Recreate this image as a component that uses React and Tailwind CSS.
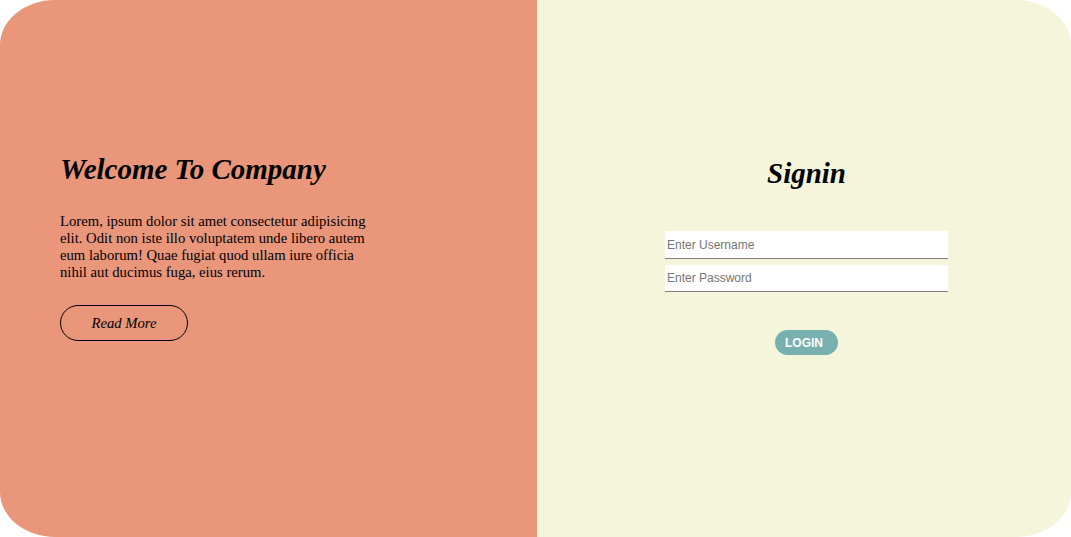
export default function App() {
  const serif = { fontFamily: '"Liberation Serif", "Times New Roman", serif' };
  const sans = { fontFamily: '"Liberation Sans", Arial, sans-serif' };
  return (
    <div className="w-[1071px] h-[537px] overflow-hidden bg-white">
      <div className="flex w-full h-full rounded-[55px/45px] overflow-hidden" style={serif}>
        <div className="w-[537px] h-full bg-[#e9967a] pl-[60px] pt-[153px] flex flex-col items-start">
          <h1 className="text-[29px] font-bold italic leading-[33px] text-black m-0">Welcome To Company</h1>
          <p className="mt-[27px] w-[320px] text-[14.7px] leading-[17px] text-black">
            Lorem, ipsum dolor sit amet consectetur adipisicing elit. Odit non iste illo voluptatem unde libero autem eum laborum! Quae fugiat quod ullam iure officia nihil aut ducimus fuga, eius rerum.
          </p>
          <button className="mt-[24px] w-[128px] h-[36px] rounded-full border border-black italic text-[14.7px] text-black bg-transparent">
            Read More
          </button>
        </div>
        <div className="flex-1 h-full bg-[#f5f5dc] pt-[157px] pl-[5px] flex flex-col items-center">
          <h2 className="text-[29px] font-bold italic leading-[33px] text-black">Signin</h2>
          <div className="mt-[41px] flex flex-col gap-[6px]" style={sans}>
            <input
              type="text"
              placeholder="Enter Username"
              className="w-[283px] h-[28px] bg-white border-0 border-b-[1.5px] border-b-[#808080] px-[2px] text-[12px] text-black placeholder:text-[#757575] outline-none"
            />
            <input
              type="password"
              placeholder="Enter Password"
              className="w-[283px] h-[27px] bg-white border-0 border-b-[1.5px] border-b-[#808080] px-[2px] text-[12px] text-black placeholder:text-[#757575] outline-none"
            />
          </div>
          <button
            className="mt-[38px] w-[63px] h-[25px] rounded-full bg-[#78b0b0] text-white text-[12px] font-bold text-left pl-[10px]"
            style={sans}
          >
            LOGIN
          </button>
        </div>
      </div>
    </div>
  );
}
